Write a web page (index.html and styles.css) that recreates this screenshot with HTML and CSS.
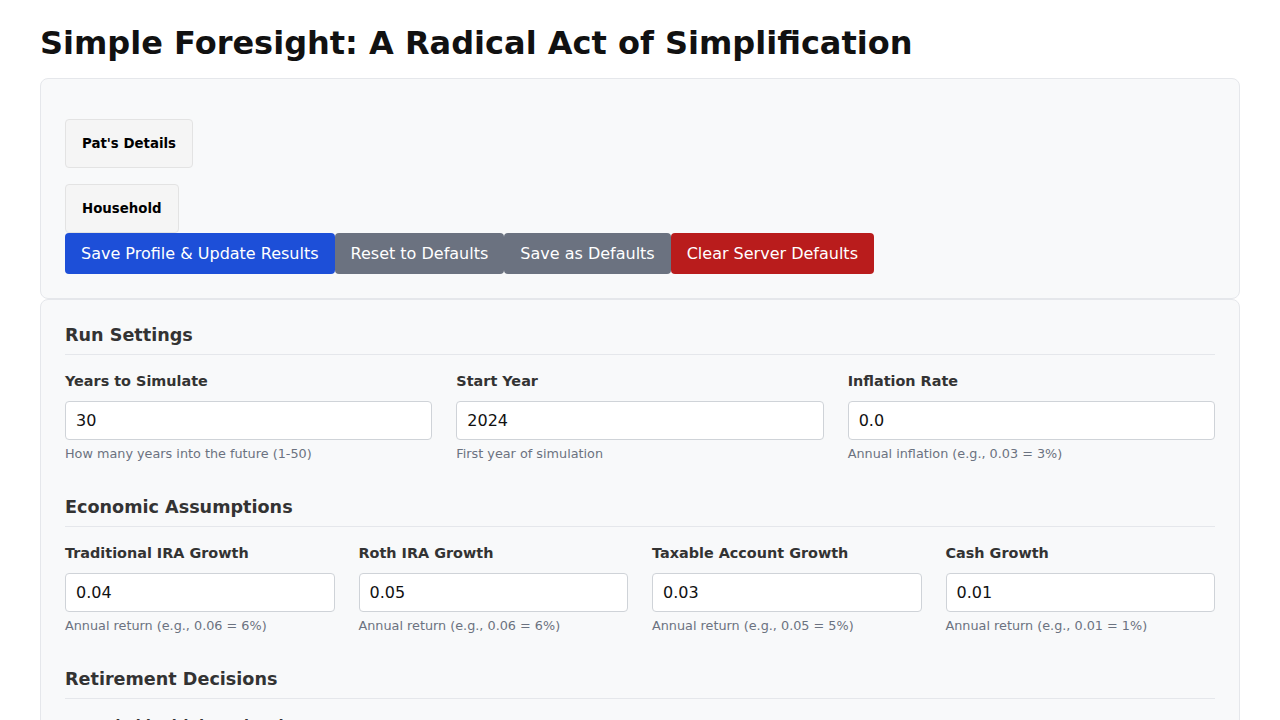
FILE: index.html
```html
<!DOCTYPE html>
<html lang="en">
<head>
<meta charset="utf-8">
<title>Simple Foresight</title>
<link rel="stylesheet" href="styles.css">
</head>
<body>
<div class="page">
  <h1 class="title">Simple Foresight: A Radical Act of Simplification</h1>

  <div class="card">
    <div class="tabs">
      <button class="tab">Pat's Details</button>
      <button class="tab">Household</button>
    </div>
    <div class="actions"><button class="btn btn-blue">Save Profile &amp; Update Results</button><button class="btn btn-gray">Reset to Defaults</button><button class="btn btn-gray">Save as Defaults</button><button class="btn btn-red">Clear Server Defaults</button></div>
  </div>

  <div class="card">
    <section class="section">
      <h2 class="section-title">Run Settings</h2>
      <div class="grid grid-3">
        <div class="field">
          <label class="label">Years to Simulate</label>
          <input class="input" type="text" value="30">
          <div class="hint">How many years into the future (1-50)</div>
        </div>
        <div class="field">
          <label class="label">Start Year</label>
          <input class="input" type="text" value="2024">
          <div class="hint">First year of simulation</div>
        </div>
        <div class="field">
          <label class="label">Inflation Rate</label>
          <input class="input" type="text" value="0.0">
          <div class="hint">Annual inflation (e.g., 0.03 = 3%)</div>
        </div>
      </div>
    </section>

    <section class="section">
      <h2 class="section-title">Economic Assumptions</h2>
      <div class="grid grid-4">
        <div class="field">
          <label class="label">Traditional IRA Growth</label>
          <input class="input" type="text" value="0.04">
          <div class="hint">Annual return (e.g., 0.06 = 6%)</div>
        </div>
        <div class="field">
          <label class="label">Roth IRA Growth</label>
          <input class="input" type="text" value="0.05">
          <div class="hint">Annual return (e.g., 0.06 = 6%)</div>
        </div>
        <div class="field">
          <label class="label">Taxable Account Growth</label>
          <input class="input" type="text" value="0.03">
          <div class="hint">Annual return (e.g., 0.05 = 5%)</div>
        </div>
        <div class="field">
          <label class="label">Cash Growth</label>
          <input class="input" type="text" value="0.01">
          <div class="hint">Annual return (e.g., 0.01 = 1%)</div>
        </div>
      </div>
    </section>

    <section class="section">
      <h2 class="section-title">Retirement Decisions</h2>
      <div class="grid grid-3">
        <div class="field">
          <label class="label">Household Withdrawal Order</label>
          <input class="input" type="text" value="">
          <div class="hint">Order of account withdrawals</div>
        </div>
      </div>
    </section>
  </div>
</div>
</body>
</html>
```

FILE: styles.css
```css
* { box-sizing: border-box; }

html, body {
  margin: 0;
  padding: 0;
  background: #ffffff;
}

body {
  font-family: "DejaVu Sans", Verdana, sans-serif;
  color: #333333;
}

.page {
  padding: 0 40px;
}

.title {
  font-size: 32px;
  font-weight: bold;
  color: #111111;
  margin: 24px 0 16px;
  line-height: 38px;
}

.card {
  background: #f8f9fa;
  border: 1px solid #e5e7eb;
  border-radius: 8px;
  padding: 24px;
}

.tabs {
  display: flex;
  flex-direction: column;
  align-items: flex-start;
}

.tab {
  margin-top: 16px;
  font-family: "DejaVu Sans", Verdana, sans-serif;
  font-size: 13.333px;
  font-weight: bold;
  line-height: 17px;
  color: #000000;
  background: #f5f5f5;
  border: 1px solid #e3e3e3;
  border-radius: 4px;
  padding: 15px 16px;
}

.actions {
  display: flex;
}

.btn {
  font-family: "DejaVu Sans", Verdana, sans-serif;
  font-size: 16px;
  line-height: 21px;
  padding: 10px 16px;
  border: none;
  border-radius: 4px;
  color: #ffffff;
}

.btn-blue { background: #1d4fd8; }
.btn-gray { background: #6b7280; }
.btn-red { background: #b91c1c; }

.section {
  margin-bottom: 35px;
}

.section-title {
  font-size: 17.6px;
  font-weight: bold;
  color: #333333;
  margin: 0 0 18px;
  padding: 1px 0 8px;
  line-height: 21px;
  border-bottom: 1px solid #e5e7eb;
}

.grid {
  display: grid;
  gap: 24px;
}

.grid-3 { grid-template-columns: repeat(3, 1fr); }
.grid-4 { grid-template-columns: repeat(4, 1fr); }

.field {
  display: flex;
  flex-direction: column;
}

.label {
  font-size: 14.4px;
  font-weight: bold;
  line-height: 16px;
  color: #333333;
  margin-bottom: 12px;
}

.input {
  font-family: "DejaVu Sans", Verdana, sans-serif;
  font-size: 16px;
  line-height: 19px;
  color: #111111;
  background: #ffffff;
  border: 1px solid #cfd3d8;
  border-radius: 4px;
  padding: 9px 10px;
  width: 100%;
}

.hint {
  font-size: 12.8px;
  line-height: 15px;
  color: #6b7280;
  margin-top: 6px;
}
```
